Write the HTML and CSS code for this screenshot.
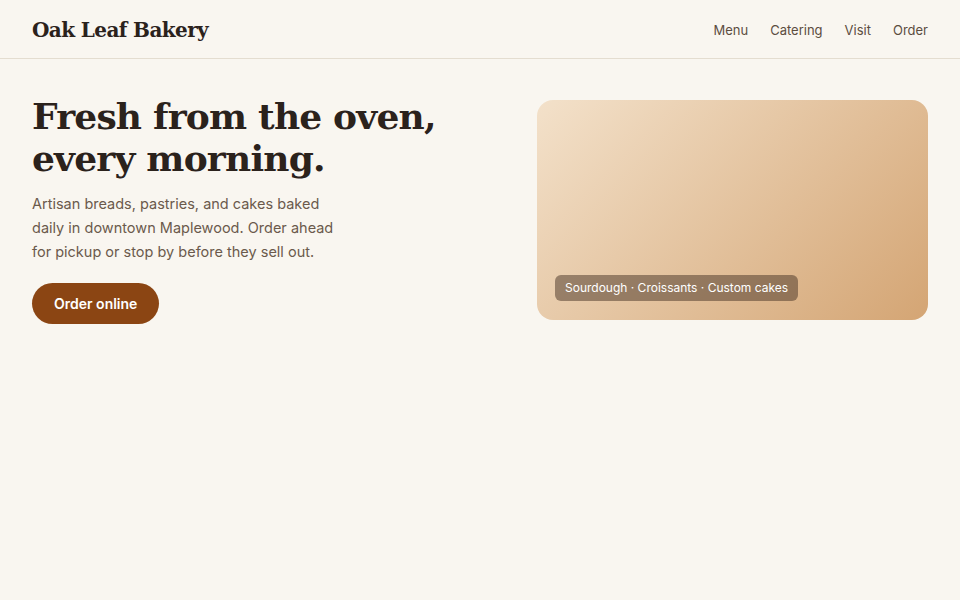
FILE: index.html
```html
<!DOCTYPE html>
<html lang="en">
<head>
<meta charset="utf-8">
<title>Oak Leaf Bakery</title>
<link rel="stylesheet" href="styles.css">
</head>
<body>
<header class="site-header">
  <div class="logo">Oak Leaf Bakery</div>
  <nav class="nav">
    <a href="#">Menu</a>
    <a href="#">Catering</a>
    <a href="#">Visit</a>
    <a href="#">Order</a>
  </nav>
</header>
<main class="hero">
  <div class="hero-text">
    <h1>Fresh from the oven, every morning.</h1>
    <p>Artisan breads, pastries, and cakes baked daily in downtown Maplewood. Order ahead for pickup or stop by before they sell out.</p>
    <a class="btn" href="#">Order online</a>
  </div>
  <div class="hero-card">
    <span class="chip">Sourdough · Croissants · Custom cakes</span>
  </div>
</main>
</body>
</html>
```
FILE: styles.css
```css
* { box-sizing: border-box; }
body {
  margin: 0;
  background: #f9f6f0;
  font-family: Inter, "Noto Sans", sans-serif;
  color: #2b221c;
}
.site-header {
  height: 59px;
  display: flex;
  align-items: center;
  justify-content: space-between;
  padding: 1px 32px 0;
  border-bottom: 1px solid #e4ddd0;
}
.logo {
  font-family: "DejaVu Serif", Georgia, serif;
  font-weight: 700;
  font-size: 20px;
  letter-spacing: -0.6px;
  color: #2b221c;
}
.nav { display: flex; gap: 22px; }
.nav a {
  color: #5c4d40;
  text-decoration: none;
  font-size: 13px;
}
.hero {
  display: grid;
  grid-template-columns: 1fr 391px;
  gap: 40px;
  padding: 41px 32px 0;
}
.hero-text { padding-top: 0; margin-top: -5px; }
.hero h1 {
  margin: 0;
  font-family: "DejaVu Serif", Georgia, serif;
  font-weight: 700;
  font-size: 36px;
  letter-spacing: -0.8px;
  line-height: 42px;
  color: #2b221c;
}
.hero p {
  margin: 13px 0 19px;
  width: 320px;
  font-size: 14.5px;
  line-height: 24px;
  color: #6b5a4c;
}
.btn {
  display: inline-flex;
  align-items: center;
  justify-content: center;
  height: 41px;
  padding: 0 22px;
  border-radius: 21px;
  background: #8b4513;
  color: #fff;
  font-weight: 600;
  font-size: 14px;
  text-decoration: none;
}
.hero-card {
  height: 220px;
  border-radius: 16px;
  background: linear-gradient(135deg, #f3e1ca 0%, #d4a574 100%);
  display: flex;
  align-items: flex-end;
  padding: 0 18px 19px;
}
.chip {
  background: rgba(70, 50, 35, 0.5);
  color: #fff;
  font-size: 12px;
  line-height: 26px;
  padding: 0 10px;
  border-radius: 6px;
}
```
